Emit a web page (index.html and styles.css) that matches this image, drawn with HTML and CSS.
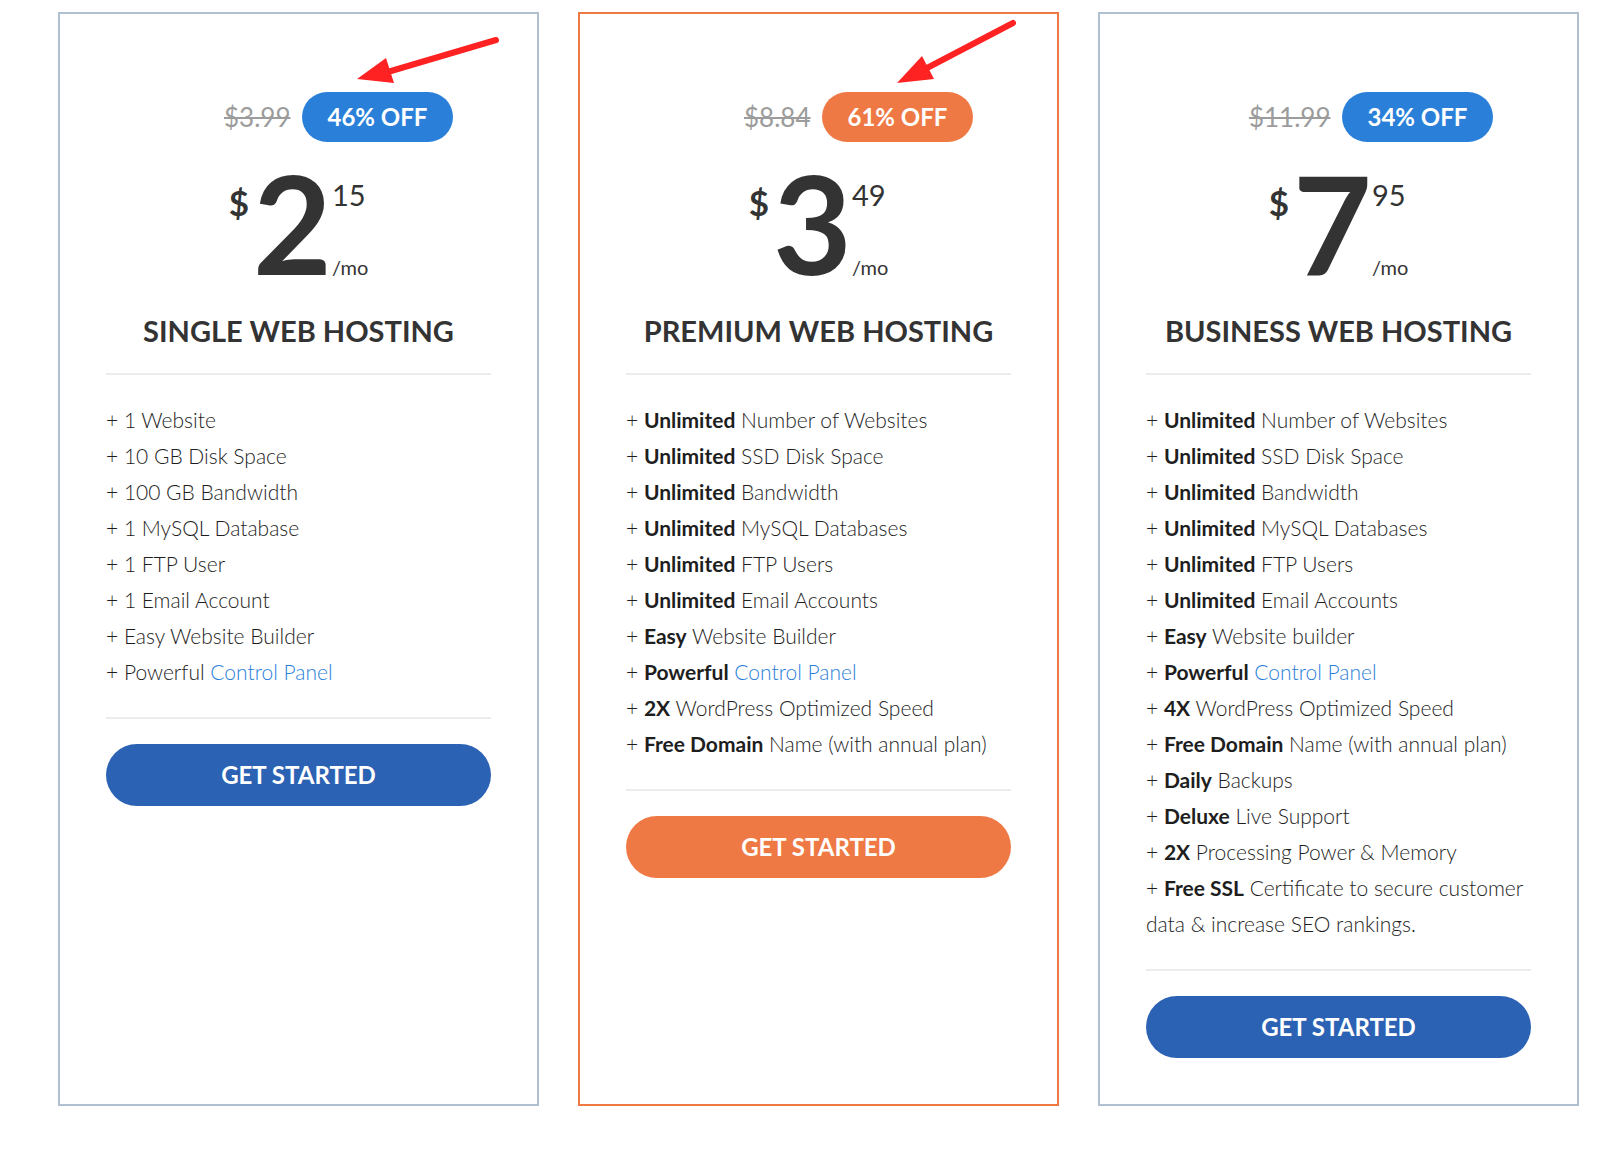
FILE: index.html
```html
<!DOCTYPE html>
<html lang="en">

<head>
    <meta charset="UTF-8">
    <meta name="viewport" content="width=device-width, initial-scale=1.0">
    <title>Web Hosting Plans</title>
    <link rel="stylesheet" href="styles.css">
</head>

<body>
    <div class="pricing">
        <!-- Single -->
        <div class="plan">
            <svg class="arrow" viewBox="0 0 481 100" width="481" height="100">
                <line x1="436" y1="26" x2="331" y2="57" />
                <polygon points="297,65 326,44 334,69" />
            </svg>
            <div class="deal">
                <span class="old">$3.99</span>
                <span class="badge">46% OFF</span>
            </div>
            <div class="price">
                <span class="cur">$</span>
                <span class="whole">2</span>
                <span class="dec">
                    <span class="cents">15</span>
                    <span class="per">/mo</span>
                </span>
            </div>
            <h2 class="plan-name">Single Web Hosting</h2>
            <ul class="features">
                <li>+ 1 Website</li>
                <li>+ 10 GB Disk Space</li>
                <li>+ 100 GB Bandwidth</li>
                <li>+ 1 MySQL Database</li>
                <li>+ 1 FTP User</li>
                <li>+ 1 Email Account</li>
                <li>+ Easy Website Builder</li>
                <li>+ Powerful <a href="#">Control Panel</a></li>
            </ul>
            <a class="btn" href="#">Get Started</a>
        </div>

        <!-- Premium -->
        <div class="plan plan-hot">
            <svg class="arrow" viewBox="0 0 481 100" width="481" height="100">
                <line x1="433" y1="9" x2="347" y2="54" />
                <polygon points="317,69 342,42 354,65" />
            </svg>
            <div class="deal">
                <span class="old">$8.84</span>
                <span class="badge">61% OFF</span>
            </div>
            <div class="price">
                <span class="cur">$</span>
                <span class="whole">3</span>
                <span class="dec">
                    <span class="cents">49</span>
                    <span class="per">/mo</span>
                </span>
            </div>
            <h2 class="plan-name">Premium Web Hosting</h2>
            <ul class="features">
                <li>+ <b>Unlimited</b> Number of Websites</li>
                <li>+ <b>Unlimited</b> SSD Disk Space</li>
                <li>+ <b>Unlimited</b> Bandwidth</li>
                <li>+ <b>Unlimited</b> MySQL Databases</li>
                <li>+ <b>Unlimited</b> FTP Users</li>
                <li>+ <b>Unlimited</b> Email Accounts</li>
                <li>+ <b>Easy</b> Website Builder</li>
                <li>+ <b>Powerful</b> <a href="#">Control Panel</a></li>
                <li>+ <b>2X</b> WordPress Optimized Speed</li>
                <li>+ <b>Free Domain</b> Name (with annual plan)</li>
            </ul>
            <a class="btn" href="#">Get Started</a>
        </div>

        <!-- Business -->
        <div class="plan">
            <div class="deal">
                <span class="old">$11.99</span>
                <span class="badge">34% OFF</span>
            </div>
            <div class="price">
                <span class="cur">$</span>
                <span class="whole">7</span>
                <span class="dec">
                    <span class="cents">95</span>
                    <span class="per">/mo</span>
                </span>
            </div>
            <h2 class="plan-name">Business Web Hosting</h2>
            <ul class="features">
                <li>+ <b>Unlimited</b> Number of Websites</li>
                <li>+ <b>Unlimited</b> SSD Disk Space</li>
                <li>+ <b>Unlimited</b> Bandwidth</li>
                <li>+ <b>Unlimited</b> MySQL Databases</li>
                <li>+ <b>Unlimited</b> FTP Users</li>
                <li>+ <b>Unlimited</b> Email Accounts</li>
                <li>+ <b>Easy</b> Website builder</li>
                <li>+ <b>Powerful</b> <a href="#">Control Panel</a></li>
                <li>+ <b>4X</b> WordPress Optimized Speed</li>
                <li>+ <b>Free Domain</b> Name (with annual plan)</li>
                <li>+ <b>Daily</b> Backups</li>
                <li>+ <b>Deluxe</b> Live Support</li>
                <li>+ <b>2X</b> Processing Power &amp; Memory</li>
                <li>+ <b>Free SSL</b> Certificate to secure customer data &amp; increase SEO rankings.</li>
            </ul>
            <a class="btn" href="#">Get Started</a>
        </div>
    </div>
</body>

</html>
```

FILE: styles.css
```css
body {
    margin: 0;
    font-family: Lato, "Open Sans", sans-serif;
    color: #333333;
    background-color: #ffffff;
}

.pricing {
    display: flex;
    align-items: stretch;
    gap: 39px;
    padding: 12px 0 44px 58px;
}

.plan {
    position: relative;
    box-sizing: border-box;
    width: 481px;
    padding: 78px 46px 46px;
    border: 2px solid #b1c0d1; /* grey-blue frame */
    text-align: center;
}

.plan-hot {
    border-color: #ef7944;
}

/* red annotation arrows drawn over the card */
.arrow {
    position: absolute;
    top: 0;
    left: 0;
    pointer-events: none;
}

.arrow line {
    stroke: #fe2222;
    stroke-width: 6;
    stroke-linecap: round;
}

.arrow polygon {
    fill: #fe2222;
}

.deal {
    display: grid;
    grid-template-columns: 1fr 1fr;
    column-gap: 11px;
    align-items: center;
    margin-right: 5px;
}

.old {
    justify-self: end;
    font-size: 26px;
    color: #9c9c9c;
    text-decoration: line-through;
}

.badge {
    justify-self: start;
    height: 50px;
    line-height: 50px;
    padding: 0 26px;
    border-radius: 25px;
    background-color: #2a80d9;
    color: #ffffff;
    font-size: 24px;
    font-weight: 700;
}

.plan-hot .badge {
    background-color: #ef7944;
}

.price {
    display: flex;
    justify-content: center;
    height: 136px;
    margin-top: 13px;
}

.cur {
    font-size: 35px;
    line-height: 34px;
    font-weight: 700;
    margin-top: 30px;
}

.whole {
    font-size: 136px;
    line-height: 136px;
    font-weight: 700;
    margin: 0 0 0 4px;
}

.dec {
    display: flex;
    flex-direction: column;
    align-items: flex-start;
}

.cents {
    font-size: 29px;
    line-height: 29px;
    margin-top: 25px;
}

.per {
    font-size: 20px;
    line-height: 20px;
    margin-top: auto;
    margin-bottom: 14px;
}

.plan-name {
    margin: 22px 0 24px;
    font-size: 29px;
    line-height: 36px;
    font-weight: 700;
    text-transform: uppercase;
}

.features {
    list-style: none;
    margin: 0;
    padding: 27px 0;
    border-top: 2px solid #ececec;
    border-bottom: 2px solid #ececec;
    text-align: left;
    font-size: 21px;
    line-height: 36px;
    font-weight: 300;
    color: #1e1e1e;
}

.features b {
    font-weight: 700;
}

.features a {
    color: #2a80d9;
    text-decoration: none;
}

.btn {
    display: block;
    height: 62px;
    margin-top: 25px;
    line-height: 62px;
    border-radius: 31px;
    background-color: #2c62b4;
    color: #ffffff;
    font-size: 24px;
    font-weight: 700;
    text-decoration: none;
    text-transform: uppercase;
}

.plan-hot .btn {
    background-color: #ef7944;
}
```
